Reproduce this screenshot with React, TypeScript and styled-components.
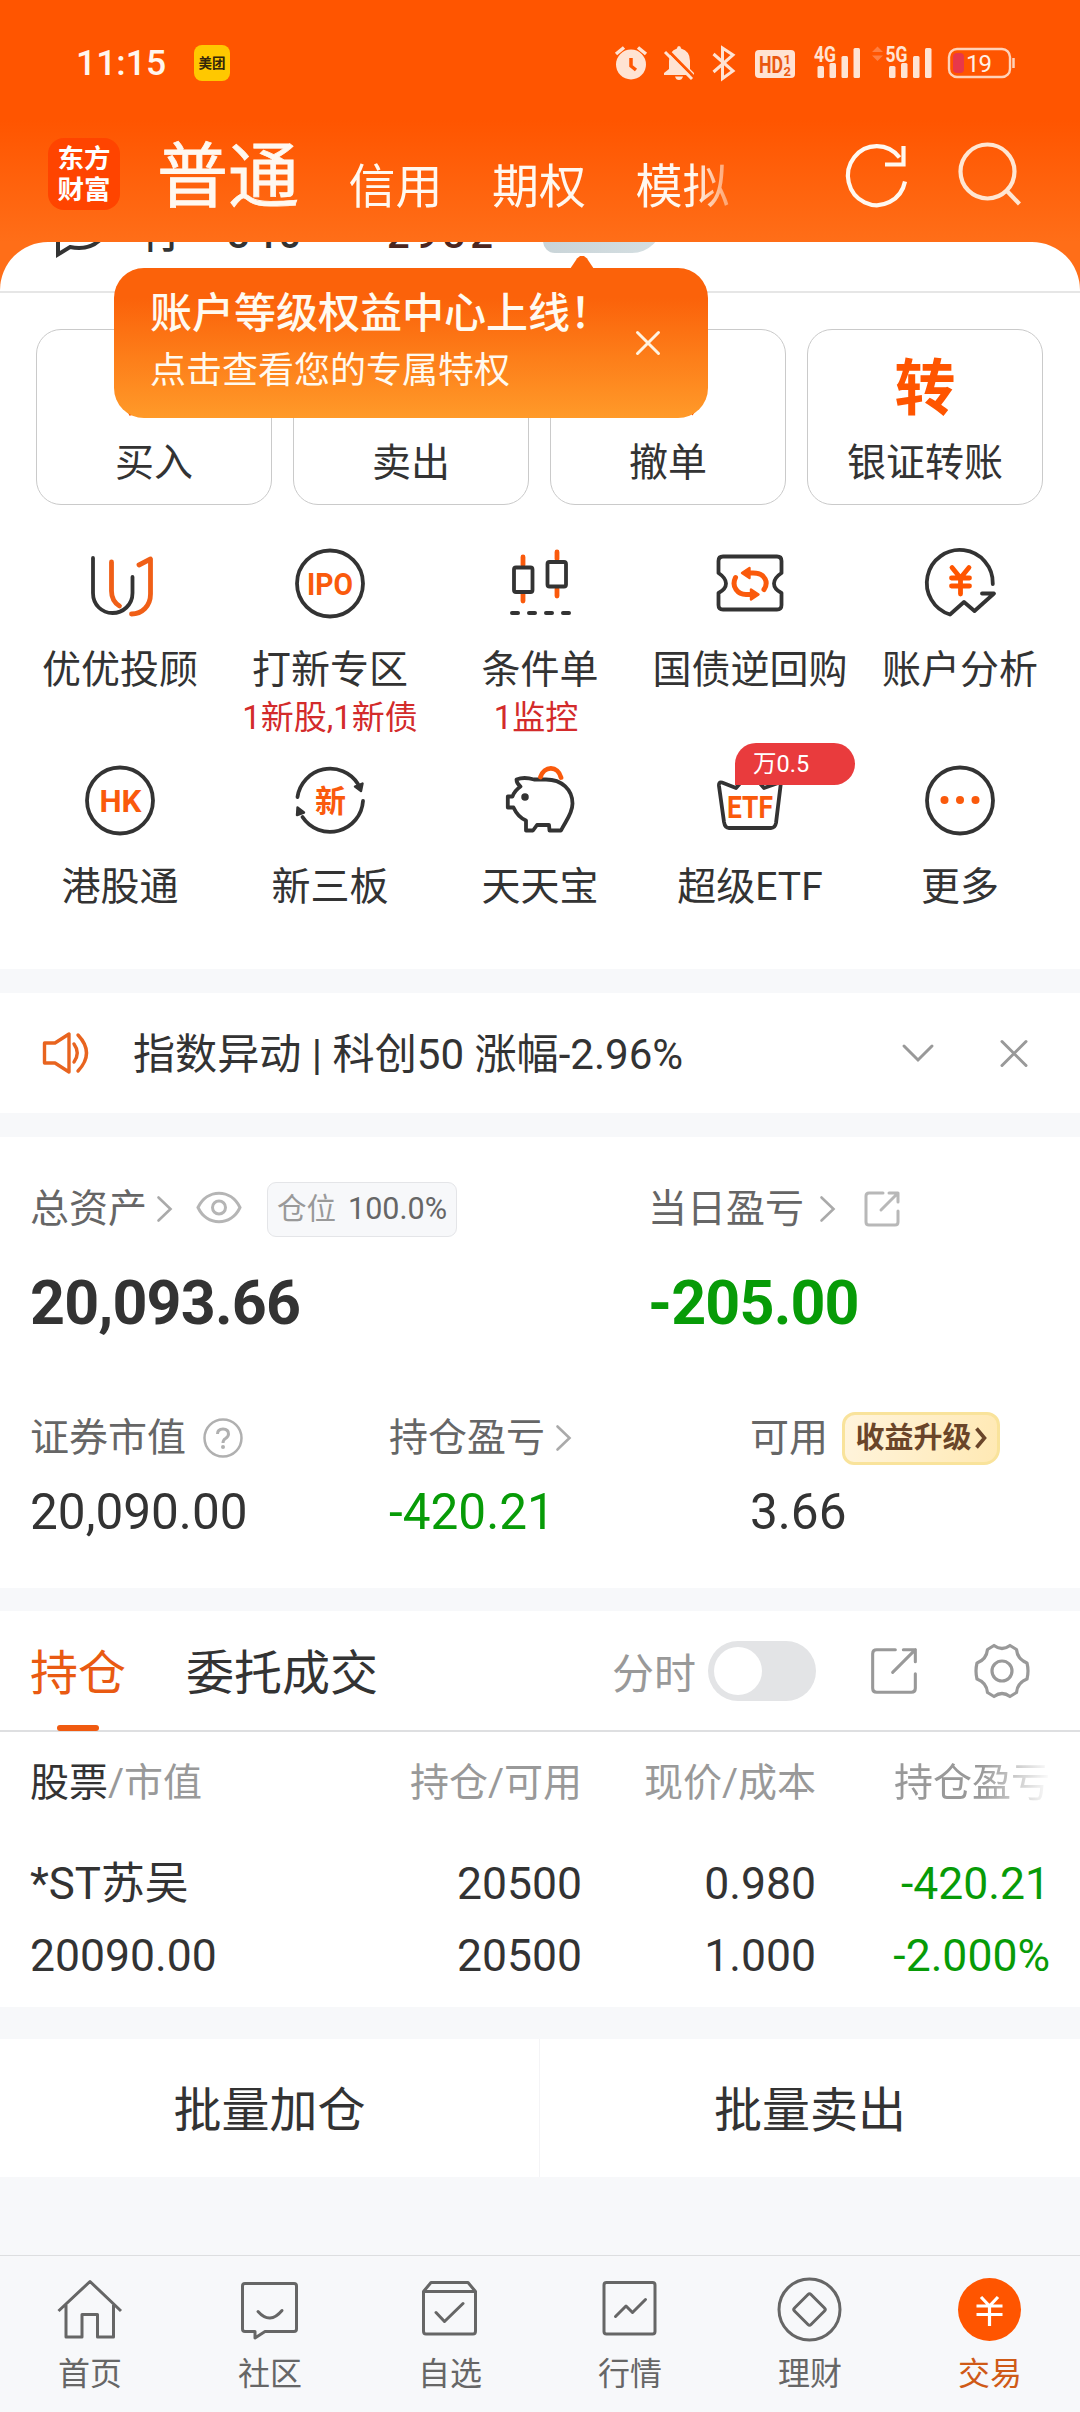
import React from "react";
import styled, { createGlobalStyle, css } from "styled-components";

const ORANGE = "#ff5500";
const INK = "#333333";
const GREEN = "#079b07";

const GlobalStyle = createGlobalStyle`
  * { box-sizing: border-box; }
  body {
    margin: 0;
    background: #f7f8fa;
    color: ${INK};
    font-family: Roboto, "Noto Sans CJK SC", sans-serif;
  }
  svg { display: block; flex: none; overflow: visible; }
`;

const Page = styled.main`
  width: 1080px;
  height: 2412px;
  display: flex;
  flex-direction: column;
  overflow: hidden;
  background: #f7f8fa;
`;

/* ---------- header ---------- */

const Header = styled.header`
  height: 292px;
  flex: none;
  margin-bottom: -50px;
  background: linear-gradient(#ff5500 0, #ff5500 120px, #ff6e18 242px);
`;

const StatusBar = styled.div`
  height: 126px;
  padding: 0 64px 0 76px;
  display: flex;
  align-items: center;
  justify-content: space-between;
`;

const StatusLeft = styled.div`
  display: flex;
  align-items: center;
`;

const Clock = styled.span`
  width: 118px;
  font-size: 35.5px;
  font-weight: 500;
  line-height: 40px;
  color: #fff6ee;
`;

const NotificationIcon = styled.span`
  width: 36px;
  height: 36px;
  border-radius: 8px;
  background: #ffc800;
  color: #33260a;
  font-size: 13.5px;
  font-weight: 700;
  line-height: 37px;
  text-align: center;
`;

const Toolbar = styled.div`
  height: 116px;
  padding: 0 58px 0 48px;
  display: flex;
  align-items: flex-start;
`;

const Logo = styled.div`
  width: 72px;
  height: 72px;
  margin-top: 12px;
  border-radius: 16px;
  background: #ff4400;
  color: #fff;
  display: flex;
  flex-direction: column;
  align-items: center;
  justify-content: center;
  font-size: 26.5px;
  font-weight: 700;
  line-height: 31px;
`;

const AccountTabs = styled.nav`
  width: 576px;
  height: 100px;
  margin-left: 37px;
  display: flex;
  gap: 49.5px;
  overflow: hidden;
  mask-image: linear-gradient(90deg, #000 536px, rgba(0, 0, 0, 0.35) 576px);
`;

const AccountTab = styled.span<{ $active?: boolean }>`
  flex: none;
  color: #fff8f0;
  white-space: nowrap;
  font-size: ${(p) => (p.$active ? 71 : 47)}px;
  line-height: 80px;
  padding-top: ${(p) => (p.$active ? 11 : 21)}px;
  -webkit-text-stroke: ${(p) => (p.$active ? "0.8px #fff8f0" : "0")};
`;

const HeaderActions = styled.div`
  margin-left: auto;
  margin-top: 16px;
  display: flex;
  gap: 49px;
`;

/* ---------- content ---------- */

const Sheet = styled.section`
  position: relative;
  height: 727px;
  flex: none;
  background: #fff;
  border-radius: 48px 48px 0 0;
`;

const ScrolledRow = styled.div`
  height: 51px;
  padding-left: 53px;
  display: flex;
  align-items: flex-start;
  border-bottom: 2px solid #e6e6e6;
`;

const ClippedStrip = styled.div`
  width: 640px;
  height: 20px;
  display: flex;
  align-items: flex-end;
  overflow: hidden;
`;

const ClippedText = styled.span<{ $width: number; $tone?: string }>`
  width: ${(p) => p.$width}px;
  flex: none;
  height: 56px;
  margin-bottom: -1px;
  line-height: 56px;
  font-size: 40px;
  font-weight: 500;
  letter-spacing: ${(p) => (p.$tone ? 5 : 3)}px;
  color: ${(p) => p.$tone ?? INK};
`;

const LevelBadge = styled.span`
  width: 119px;
  flex: none;
  height: 40px;
  margin-bottom: 9px;
  border-radius: 0 0 30px 12px;
  background: linear-gradient(90deg, #c9d4d8, #d5dfe2);
`;

const Actions = styled.div`
  display: grid;
  grid-template-columns: repeat(4, 1fr);
  gap: 21px;
  padding: 36px 37px 0 36px;
`;

const ActionCard = styled.button`
  height: 176px;
  padding: 25px 0 0;
  border: 1px solid #cacaca;
  border-radius: 25px;
  background: #fff;
  display: flex;
  flex-direction: column;
  align-items: center;
  gap: 18px;
  font-family: inherit;
  color: ${INK};
`;

const ActionGlyph = styled.span`
  height: 66px;
  line-height: 68px;
  font-size: 61px;
  font-weight: 700;
  color: ${ORANGE};
`;

const ActionLabel = styled.span`
  font-size: 39px;
  line-height: 48px;
`;

const Tooltip = styled.aside`
  position: absolute;
  left: 114px;
  top: 26px;
  width: 594px;
  height: 150px;
  border-radius: 30px;
  background: linear-gradient(#fb620a 20%, #ff9a29);
  padding: 22px 45px 0 36px;
  display: flex;
  justify-content: space-between;
  color: #fffaf0;

  &::before {
    content: "";
    position: absolute;
    left: 456px;
    top: -12px;
    width: 24px;
    height: 13px;
    background: #fb620a;
    clip-path: polygon(0 100%, 30% 18%, 42% 0, 58% 0, 70% 18%, 100% 100%);
  }
`;

const TooltipTitle = styled.div`
  font-size: 42px;
  font-weight: 500;
  line-height: 48px;
  white-space: nowrap;
`;

const TooltipText = styled.div`
  margin-top: 9px;
  font-size: 36px;
  line-height: 48px;
`;

const TooltipClose = styled.span`
  margin-top: 38px;
`;

const Shortcuts = styled.div`
  display: grid;
  grid-template-columns: repeat(5, 210px);
  grid-auto-rows: 217px;
  padding: 42px 15px 0;
`;

const Shortcut = styled.div`
  position: relative;
  display: flex;
  flex-direction: column;
  align-items: center;
  white-space: nowrap;
`;

const ShortcutLabel = styled.span`
  margin-top: 26px;
  font-size: 39px;
  line-height: 50px;
`;

const ShortcutNote = styled.span<{ $shift?: number }>`
  margin-top: 0;
  margin-right: ${(p) => p.$shift ?? 0}px;
  font-size: 33px;
  line-height: 46px;
  color: #d32b2b;
`;

const RateBadge = styled.span`
  position: absolute;
  left: 90px;
  top: -21px;
  width: 120px;
  height: 42px;
  padding-left: 18px;
  border-radius: 21px 21px 21px 0;
  background: #e93b3d;
  color: #fff;
  font-size: 23.5px;
  line-height: 43px;
`;

const Notice = styled.section`
  height: 120px;
  flex: none;
  margin-top: 24px;
  padding: 0 51px 0 42px;
  display: flex;
  align-items: center;
  background: #fff;
`;

const NoticeText = styled.span`
  margin-left: 43px;
  margin-right: auto;
  font-size: 42.1px;
  line-height: 60px;
  padding-top: 4px;
`;

const Assets = styled.section`
  height: 451px;
  flex: none;
  margin-top: 24px;
  padding: 45px 0 0 30px;
  background: #fff;
`;

const AssetRow = styled.div<{ $columns: string; $top?: number }>`
  display: grid;
  grid-template-columns: ${(p) => p.$columns};
  margin-top: ${(p) => p.$top ?? 0}px;
`;

const LabelLine = styled.div`
  height: 54px;
  display: flex;
  align-items: center;
  font-size: 39px;
  line-height: 54px;
  color: #666;
  white-space: nowrap;
`;

const Gap = styled.i<{ $w: number }>`
  width: ${(p) => p.$w}px;
  flex: none;
`;

const PositionTag = styled.span`
  width: 190px;
  height: 55px;
  border: 1px solid #e4e5e8;
  border-radius: 9px;
  background: #f7f8fa;
  display: flex;
  align-items: center;
  justify-content: center;
  gap: 12px;
  font-size: 30.5px;
  line-height: 52px;
  color: #666;

  small { font-size: 29.5px; color: #999; }
`;

const figure = css<{ $down?: boolean }>`
  color: ${(p) => (p.$down ? GREEN : INK)};
  white-space: nowrap;
`;

const BigFigure = styled.div<{ $down?: boolean }>`
  ${figure}
  margin-top: 32px;
  font-size: 61px;
  font-weight: 700;
  letter-spacing: -0.85px;
  line-height: 70px;
`;

const Figure = styled.div<{ $down?: boolean }>`
  ${figure}
  margin-top: 17px;
  font-size: 49.5px;
  line-height: 60px;
`;

const UpgradeTag = styled.span`
  width: 158px;
  height: 53px;
  border: 3px solid #f9e39b;
  border-radius: 13px 13px 16px 12px;
  background: linear-gradient(100deg, #fff4dc, #ffe9b4);
  color: #6a4529;
  display: flex;
  align-items: center;
  justify-content: center;
  gap: 3px;
  font-size: 29px;
  font-weight: 700;
  line-height: 48px;
`;

const Holdings = styled.section`
  height: 396px;
  flex: none;
  margin-top: 23px;
  background: #fff;
`;

const TabBar = styled.div`
  height: 121px;
  padding: 0 50px 0 30px;
  border-bottom: 2px solid #dedfe1;
  display: flex;
  align-items: center;
`;

const Tab = styled.span<{ $active?: boolean }>`
  height: 120px;
  margin-right: 60px;
  font-size: 48px;
  line-height: 125px;
  color: ${(p) => (p.$active ? "#e95a12" : INK)};
  ${(p) =>
    p.$active &&
    css`
      display: flex;
      flex-direction: column;
      align-items: center;
      &::after {
        content: "";
        flex: none;
        width: 42px;
        height: 6px;
        margin-top: -11px;
        border-radius: 3px;
        background: #f05a10;
      }
    `}
`;

const TabTools = styled.div`
  margin-left: auto;
  display: flex;
  align-items: center;
  font-size: 42px;
  color: #999;
`;

const Toggle = styled.span`
  width: 108px;
  height: 60px;
  margin: 0 54px 0 12px;
  padding: 6px;
  border-radius: 30px;
  background: #e3e4e6;

  &::before {
    content: "";
    display: block;
    width: 48px;
    height: 48px;
    border-radius: 50%;
    background: #fff;
  }
`;

const TableRow = styled.div<{ $head?: boolean }>`
  display: grid;
  grid-template-columns: 300px 252px 234px 234px;
  height: ${(p) => (p.$head ? 102 : 72)}px;
  line-height: ${(p) => (p.$head ? 102 : 72)}px;
  padding-left: 30px;
  font-size: ${(p) => (p.$head ? 39 : 44.5)}px;
  color: ${(p) => (p.$head ? "#999" : INK)};
  white-space: nowrap;
`;

const TableBody = styled.div`
  padding-top: 14px;
`;

const StockName = styled.span`
  font-size: 43.8px;
`;

const Cell = styled.span<{ $align?: "right"; $down?: boolean; $fade?: boolean }>`
  text-align: ${(p) => p.$align ?? "left"};
  ${(p) => p.$down && `color: ${GREEN};`}
  ${(p) => p.$fade && "mask-image: linear-gradient(90deg, #000 165px, rgba(0,0,0,0.05) 232px);"}

  b { font-weight: 400; color: ${INK}; }
`;

const BatchBar = styled.div`
  height: 138px;
  flex: none;
  margin-top: 32px;
  display: grid;
  grid-template-columns: 539px 541px;
  background: #fff;
`;

const BatchButton = styled.button`
  border: 0;
  background: none;
  font-family: inherit;
  font-size: 48px;
  line-height: 60px;
  padding: 5px 0 0;
  color: ${INK};

  & + & { border-left: 1px solid #f4f4f6; }
`;

const BottomNav = styled.nav`
  height: 157px;
  flex: none;
  margin-top: auto;
  border-top: 1px solid #dddee0;
  display: grid;
  grid-template-columns: repeat(6, 180px);
  background: #f7f8fa;
`;

const NavItem = styled.div<{ $active?: boolean }>`
  padding-top: 17px;
  display: flex;
  flex-direction: column;
  align-items: center;
  color: ${(p) => (p.$active ? "#cf5a17" : "#666")};
`;

const NavLabel = styled.span`
  margin-top: 8px;
  font-size: 32px;
  line-height: 42px;
`;

/* ---------- icons ---------- */

const Line = ({
  size = 72,
  color = INK,
  width = 3.8,
  children,
}: {
  size?: number;
  color?: string;
  width?: number;
  children: React.ReactNode;
}) => (
  <svg width={size} height={size} viewBox={`0 0 ${size} ${size}`} fill="none" stroke={color}
    strokeWidth={width} strokeLinecap="round" strokeLinejoin="round">
    {children}
  </svg>
);

const IconWord = styled.text`
  fill: #fa5a0c;
  stroke: none;
  font-weight: 700;
  text-anchor: middle;
`;

const Chevron = ({ color = "#aaa" }: { color?: string }) => (
  <svg width="15" height="26" viewBox="0 0 15 26" fill="none" stroke={color} strokeWidth="2.6" strokeLinecap="round">
    <path d="M1.5 1.5 L13.5 13 L1.5 24.5" />
  </svg>
);

const StatusIcons = () => (
  <svg width="404" height="38" viewBox="612 43 404 38" fill="#ffe3d3">
    <circle cx="631" cy="63.5" r="15" />
    <path d="M616 53 L624 46.500 M646 53 L638 46.500" stroke="#ffe3d3" strokeWidth="3.500" />
    <path d="M631 57 V65 L636 69" stroke={ORANGE} strokeWidth="3.500" fill="none" />
    <path d="M679 45 Q681 45 681 47.500 Q690 50 690 60 V68 L694 72 V74 H664 V72 L669 68 V60 Q669 50 677 47.500 Q677 45 679 45 Z M675 75.500 H683 Q682 79 679 79 Q676 79 675 75.500Z" />
    <path d="M667 48.500 L695 77" stroke={ORANGE} strokeWidth="3" />
    <path d="M665 51 L692 78" stroke="#ffe3d3" strokeWidth="3" />
    <path d="M713.500 53 L733 70 L722.500 77.500 V47 L733 54 L713.500 71" fill="none" stroke="#ffe3d3" strokeWidth="3" />
    <rect x="755" y="49" width="40" height="28" rx="4" />
    <text x="759" y="71.500" fontSize="23" fontWeight="700" fill="#e9570f" textLength="24" lengthAdjust="spacingAndGlyphs">HD</text>
    <text x="783.500" y="62.500" fontSize="13" fontWeight="700" fill="#e9570f">1</text>
    <text x="783.500" y="74.500" fontSize="13" fontWeight="700" fill="#e9570f">2</text>
    <text x="814" y="60.500" fontSize="22" fontWeight="700" textLength="22" lengthAdjust="spacingAndGlyphs">4G</text>
    <text x="885.500" y="60.500" fontSize="22" fontWeight="700" textLength="22" lengthAdjust="spacingAndGlyphs">5G</text>
    {[817.5, 889].map((x) => (
      <g key={x}>
        <rect x={x} y="65" width="6.500" height="12" rx="1.500" />
        <rect x={x + 12} y="62" width="6.500" height="15" rx="1.500" />
        <rect x={x + 24} y="55" width="6.500" height="22" rx="1.500" />
        <rect x={x + 36} y="47" width="6.500" height="30" rx="1.500" />
      </g>
    ))}
    <path d="M872 51 L877.500 45.500 L883 51 Z M872 54.500 L877.500 60 L883 54.500 Z" fill="#ff7f42" />
    <rect x="949" y="48" width="61" height="28" rx="8" fill="none" stroke="#ffd2b8" strokeWidth="2.400" />
    <path d="M1013.500 57 V67" stroke="#ffd2b8" strokeWidth="2.500" />
    <rect x="953" y="52" width="11" height="20" rx="4" fill="#e8384a" />
    <text x="966" y="71" fontSize="24" textLength="26" fill="#fff0e6">19</text>
  </svg>
);

const OpenIcon = ({ size, color, width }: { size: number; color: string; width: number }) => (
  <svg width={size} height={size} viewBox="0 0 36 36" fill="none" stroke={color} strokeWidth={width} strokeLinecap="round" strokeLinejoin="round">
    <path d="M19 2 H5 Q2 2 2 5 V31 Q2 34 5 34 H31 Q34 34 34 31 V20 M25 2 H34 V11 M34 2 L17 19" />
  </svg>
);

const shortcuts: { label: string; note?: string; shift?: number; badge?: string; icon: React.ReactNode }[] = [
  {
    label: "优优投顾",
    icon: (
      <Line>
        <path d="M9 11 V46 C9 58 18 66 28.500 66 S48.500 58 48.500 46 V30" />
        <g stroke="#f05f17" strokeWidth="4.800">
          <path d="M27.500 15 V44 Q27.500 54 35.500 59" />
          <path d="M55 18 L66.500 12 V47 C66.500 59 58 67 47.500 67" />
        </g>
      </Line>
    ),
  },
  {
    label: "打新专区",
    note: "1新股,1新债",
    icon: (
      <Line>
        <circle cx="36" cy="36.500" r="33" />
        <IconWord x="36" y="47.500" fontSize="31.500" textLength="46" lengthAdjust="spacingAndGlyphs">IPO</IconWord>
      </Line>
    ),
  },
  {
    label: "条件单",
    note: "1监控",
    shift: 8,
    icon: (
      <Line>
        <g stroke="#fa5a0c" strokeWidth="4.800">
          <path d="M19 10 V18 M19 47 V54 M53 5 V12 M53 42 V49" />
        </g>
        <rect x="10" y="20.500" width="18.500" height="24.500" rx="2" />
        <rect x="43.500" y="15" width="18.500" height="24.500" rx="2" />
        <path d="M8 66 H14 M25 66 H31 M42 66 H48 M59 66 H65" strokeWidth="4" />
      </Line>
    ),
  },
  {
    label: "国债逆回购",
    icon: (
      <Line>
        <path d="M9 9.500 H63 Q67.500 9.500 67.500 14 V26 Q60 31 60 36.500 T67.500 46 V58 Q67.500 62.500 63 62.500 H9 Q4.500 62.500 4.500 58 V46 Q12 42 12 36.500 T4.500 26 V14 Q4.500 9.500 9 9.500 Z" />
        <g stroke="#fa5a0c" strokeWidth="5">
          <path d="M34 26 H39 C52 26 54.500 36 50 42.500 M21.500 30.500 C17 40 24 47.500 32 47.500 H38" />
          <path d="M28 26 L35.500 21 V31 Z M44.500 47.500 L37 42.500 V52.500 Z" fill="#fa5a0c" strokeWidth="2.400" />
        </g>
      </Line>
    ),
  },
  {
    label: "账户分析",
    icon: (
      <Line>
        <path d="M68.800 37 A33 33 0 1 0 26 67.500 L40 55 L50.500 64 L70 46.500 H58" />
        <path d="M28 20.500 L36.500 31 L45 20.500 M27.500 31 H45.500 M27.500 39 H45.500 M36.500 31 V47" stroke={ORANGE} strokeWidth="4.800" />
      </Line>
    ),
  },
  {
    label: "港股通",
    icon: (
      <Line>
        <circle cx="36" cy="36.500" r="33" />
        <IconWord x="36.500" y="47.500" fontSize="32" textLength="42" lengthAdjust="spacingAndGlyphs">HK</IconWord>
      </Line>
    ),
  },
  {
    label: "新三板",
    icon: (
      <Line>
        <path d="M3.500 33 A33 33 0 0 1 64 20 M69 37 A33 33 0 0 1 8.500 53" />
        <path d="M61 22.500 L68.500 19.500 L67 27 Z M3.500 43.500 L10 48.500 L3 51 Z" fill={INK} strokeWidth="2.400" />
        <IconWord x="36.500" y="48" fontSize="31">新</IconWord>
      </Line>
    ),
  },
  {
    label: "天天宝",
    icon: (
      <Line>
        <path d="M12.500 15.500 Q20 12.500 30 15.500 H42 C58 15.500 68.500 26 68.500 39.500 C68.500 50 61 58 57 66.500 H45.500 L45 61 H33 L29 66.500 H22 V56.500 C16 54 12 49 9.500 43.500 H3.800 V32.500 H8.500 C10 28 13 25 16.500 22.500 Q12.500 19.500 12.500 15.500 Z" />
        <circle cx="21" cy="33" r="3" fill={INK} strokeWidth="1.500" />
        <path d="M36.500 13 C40 1.500 54 1.500 57 13.500" stroke="#fa5a0c" strokeWidth="4.800" />
      </Line>
    ),
  },
  {
    label: "超级ETF",
    badge: "万0.5",
    icon: (
      <Line>
        <path d="M22 24 L8 18.500 Q4.500 17.500 5 22 L10 58 Q11 64 15 64 H57 Q61 64 62 59 L67 18 L50 24 L36 8 Z" />
        <IconWord x="36" y="54" fontSize="32" textLength="46" lengthAdjust="spacingAndGlyphs">ETF</IconWord>
      </Line>
    ),
  },
  {
    label: "更多",
    icon: (
      <Line>
        <circle cx="36" cy="36.500" r="33" />
        <g fill="#fa5a0c" stroke="none">
          <circle cx="20.500" cy="36" r="4" />
          <circle cx="36" cy="36" r="4" />
          <circle cx="51.500" cy="36" r="4" />
        </g>
      </Line>
    ),
  },
];

const navItems: { label: string; active?: boolean; icon: React.ReactNode }[] = [
  {
    label: "首页",
    icon: <path d="M4.500 38 L36 8.500 L67 38 M12 32 V64 H28 V41.500 H43.500 V64 H59.500 V32" strokeLinecap="butt" />,
  },
  {
    label: "社区",
    icon: (
      <>
        <path d="M11 10.500 H60 Q62.500 10.500 62.500 13 V56 Q62.500 58.500 60 58.500 H31 L21 65 V58.500 H11 Q8.500 58.500 8.500 56 V13 Q8.500 10.500 11 10.500 Z" />
        <path d="M24 38.500 Q36 52 48 37.500" />
      </>
    ),
  },
  {
    label: "自选",
    icon: (
      <path d="M9.500 18.500 L17 9.500 H54 L61.500 18.500 V58 Q61.500 61 59 61 H12 Q9.500 61 9.500 58 Z H61.500 M22 39.500 L30.500 48.500 L49 30.500" />
    ),
  },
  {
    label: "行情",
    icon: (
      <>
        <rect x="10" y="9.500" width="51" height="51.500" rx="2.500" />
        <path d="M21.500 43.500 L32 33 L38.500 39.500 L51.500 26.500" />
      </>
    ),
  },
  {
    label: "理财",
    icon: (
      <>
        <circle cx="35.500" cy="36.500" r="30.500" />
        <path d="M34 21.500 Q35.500 20 37 21.500 L50.500 35 Q52 36.500 50.500 38 L37 51.500 Q35.500 53 34 51.500 L20.500 38 Q19 36.500 20.500 35 Z" />
      </>
    ),
  },
  {
    label: "交易",
    active: true,
    icon: (
      <>
        <circle cx="35.500" cy="36.500" r="31.500" fill={ORANGE} stroke="none" />
        <path d="M27 24 L35.500 33 L44 24 M22.500 33 H48.500 M22.500 41.500 H48.500 M35.500 33 V53" stroke="#fff" strokeLinecap="butt" strokeWidth="3.200" />
      </>
    ),
  },
];

const holdings = [
  ["*ST苏吴", "20500", "0.980", "-420.21"],
  ["20090.00", "20500", "1.000", "-2.000%"],
];

export default function App() {
  return (
    <Page>
      <GlobalStyle />
      <Header>
        <StatusBar>
          <StatusLeft>
            <Clock>11:15</Clock>
            <NotificationIcon>美团</NotificationIcon>
          </StatusLeft>
          <StatusIcons />
        </StatusBar>
        <Toolbar>
          <Logo>
            <span>东方</span>
            <span>财富</span>
          </Logo>
          <AccountTabs>
            <AccountTab $active>普通</AccountTab>
            <AccountTab>信用</AccountTab>
            <AccountTab>期权</AccountTab>
            <AccountTab>模拟</AccountTab>
          </AccountTabs>
          <HeaderActions>
            <Line size={64} color="#fff8f0" width={4.2}>
              <g strokeLinecap="butt" strokeLinejoin="miter">
                <path d="M60 39.500 A28.800 29.500 0 1 1 54.500 15.500" />
                <path d="M58.500 4 V22.500 H40" />
              </g>
            </Line>
            <Line size={64} color="#ffe6d2" width={4.2}>
              <circle cx="29.500" cy="29.500" r="27" />
              <path d="M49 49 L60 60.500" strokeLinecap="square" />
            </Line>
          </HeaderActions>
        </Toolbar>
      </Header>

      <Sheet>
        <ScrolledRow>
          <ClippedStrip>
            <svg width="50" height="20" viewBox="0 0 50 20" fill="none" stroke={INK} strokeWidth="4">
              <path d="M5 -2 V12.500 L17 5 Q36 9 48 -3" />
            </svg>
            <Gap $w={38} />
            <ClippedText $width={86}>行</ClippedText>
            <ClippedText $width={160}>840</ClippedText>
            <ClippedText $width={156} $tone="#4b2620">2982</ClippedText>
            <LevelBadge />
          </ClippedStrip>
        </ScrolledRow>
        <Actions>
          {[
            ["买", "买入"],
            ["卖", "卖出"],
            ["撤", "撤单"],
            ["转", "银证转账"],
          ].map(([glyph, label]) => (
            <ActionCard key={label}>
              <ActionGlyph>{glyph}</ActionGlyph>
              <ActionLabel>{label}</ActionLabel>
            </ActionCard>
          ))}
        </Actions>
        <Shortcuts>
          {shortcuts.map((s) => (
            <Shortcut key={s.label}>
              {s.icon}
              <ShortcutLabel>{s.label}</ShortcutLabel>
              {s.note && <ShortcutNote $shift={s.shift}>{s.note}</ShortcutNote>}
              {s.badge && <RateBadge>{s.badge}</RateBadge>}
            </Shortcut>
          ))}
        </Shortcuts>
        <Tooltip>
          <div>
            <TooltipTitle>账户等级权益中心上线！</TooltipTitle>
            <TooltipText>点击查看您的专属特权</TooltipText>
          </div>
          <TooltipClose>
            <svg width="30" height="30" viewBox="0 0 30 30" fill="none" stroke="#fff3e0" strokeWidth="3" strokeLinecap="round">
              <path d="M4.500 4.500 L25.500 25.500 M25.500 4.500 L4.500 25.500" />
            </svg>
          </TooltipClose>
        </Tooltip>
      </Sheet>

      <Notice>
        <svg width="48" height="42" viewBox="0 0 48 42" fill="none" stroke="#e8641f" strokeWidth="3.400" strokeLinejoin="round" strokeLinecap="round">
          <path d="M2.500 11 H13 L27 2 V40 L13 31 H2.500 Z" />
          <path d="M32 12 Q38.500 21 32 30 M36 3 Q53 21 36 39" />
        </svg>
        <NoticeText>指数异动 | 科创50 涨幅-2.96%</NoticeText>
        <svg width="32" height="20" viewBox="0 0 32 20" fill="none" stroke="#999" strokeWidth="3" strokeLinecap="round">
          <path d="M2 3 L16 17 L30 3" />
        </svg>
        <Gap $w={65} />
        <svg width="30" height="30" viewBox="0 0 30 30" fill="none" stroke="#999" strokeWidth="3" strokeLinecap="round">
          <path d="M3 3.500 L27 27.500 M27 3.500 L3 27.500" />
        </svg>
      </Notice>

      <Assets>
        <AssetRow $columns="618px 1fr">
          <div>
            <LabelLine>
              总资产
              <Gap $w={10} />
              <Chevron />
              <Gap $w={24} />
              <svg width="46" height="32" viewBox="0 0 46 32" fill="none" stroke="#b5b5b5" strokeWidth="3">
                <path d="M2 14.500 C11 -4.500 35 -4.500 44 14.500 C35 33.500 11 33.500 2 14.500 Z" />
                <circle cx="23" cy="14.500" r="6.500" />
              </svg>
              <Gap $w={25} />
              <PositionTag>
                <small>仓位</small>
                <span>100.0%</span>
              </PositionTag>
            </LabelLine>
            <BigFigure>20,093.66</BigFigure>
          </div>
          <div>
            <LabelLine>
              当日盈亏
              <Gap $w={16} />
              <Chevron />
              <Gap $w={29} />
              <OpenIcon size={36} color="#b8b8b8" width={3} />
            </LabelLine>
            <BigFigure $down>-205.00</BigFigure>
          </div>
        </AssetRow>
        <AssetRow $columns="359px 361px 1fr" $top={73}>
          <div>
            <LabelLine>
              证券市值
              <Gap $w={17} />
              <svg width="40" height="40" viewBox="0 0 40 40" fill="none" stroke="#b0b0b0" strokeWidth="2.500">
                <circle cx="20" cy="20" r="18.500" />
                <path d="M14.500 16 Q14.500 11 20 11 T25.500 16 Q25.500 18.500 22.500 20.500 Q20 22 20 25" strokeWidth="3" />
                <circle cx="20" cy="29" r="2" fill="#b0b0b0" stroke="none" />
              </svg>
            </LabelLine>
            <Figure>20,090.00</Figure>
          </div>
          <div>
            <LabelLine>
              持仓盈亏
              <Gap $w={11} />
              <Chevron />
            </LabelLine>
            <Figure $down>-420.21</Figure>
          </div>
          <div>
            <LabelLine>
              可用
              <Gap $w={14} />
              <UpgradeTag>
                收益升级
                <svg width="12" height="22" viewBox="0 0 12 22" fill="none" stroke="#6a4529" strokeWidth="3.600">
                  <path d="M1.500 1.500 L9.500 11 L1.500 20.500" />
                </svg>
              </UpgradeTag>
            </LabelLine>
            <Figure>3.66</Figure>
          </div>
        </AssetRow>
      </Assets>

      <Holdings>
        <TabBar>
          <Tab $active>持仓</Tab>
          <Tab>委托成交</Tab>
          <TabTools>
            分时
            <Toggle />
            <OpenIcon size={48} color="#999" width={2.3} />
            <Gap $w={56} />
            <svg width="56" height="56" viewBox="0 0 56 56" fill="none" stroke="#999" strokeWidth="3.200" strokeLinejoin="round">
              <path d="M20 2.500 Q28 8.500 36 2.500 L42.500 6.500 Q43.500 16.500 53 20 Q55 28 53 36 Q43.500 39.500 42.500 49.500 L36 53.500 Q28 47.500 20 53.500 L13.500 49.500 Q12.500 39.500 3 36 Q1 28 3 20 Q12.500 16.500 13.500 6.500 Z" />
              <circle cx="28" cy="28" r="10" />
            </svg>
          </TabTools>
        </TabBar>
        <TableRow $head>
          <Cell><b>股票</b>/市值</Cell>
          <Cell $align="right">持仓/可用</Cell>
          <Cell $align="right">现价/成本</Cell>
          <Cell $align="right" $fade>持仓盈亏</Cell>
        </TableRow>
        <TableBody>
          {holdings.map(([name, amount, price, profit], i) => (
            <TableRow key={name}>
              <Cell>{i === 0 ? <StockName>{name}</StockName> : name}</Cell>
              <Cell $align="right">{amount}</Cell>
              <Cell $align="right">{price}</Cell>
              <Cell $align="right" $down>{profit}</Cell>
            </TableRow>
          ))}
        </TableBody>
      </Holdings>

      <BatchBar>
        <BatchButton>批量加仓</BatchButton>
        <BatchButton>批量卖出</BatchButton>
      </BatchBar>

      <BottomNav>
        {navItems.map((item) => (
          <NavItem key={item.label} $active={item.active}>
            <Line color="#666" width={3}>{item.icon}</Line>
            <NavLabel>{item.label}</NavLabel>
          </NavItem>
        ))}
      </BottomNav>
    </Page>
  );
}
